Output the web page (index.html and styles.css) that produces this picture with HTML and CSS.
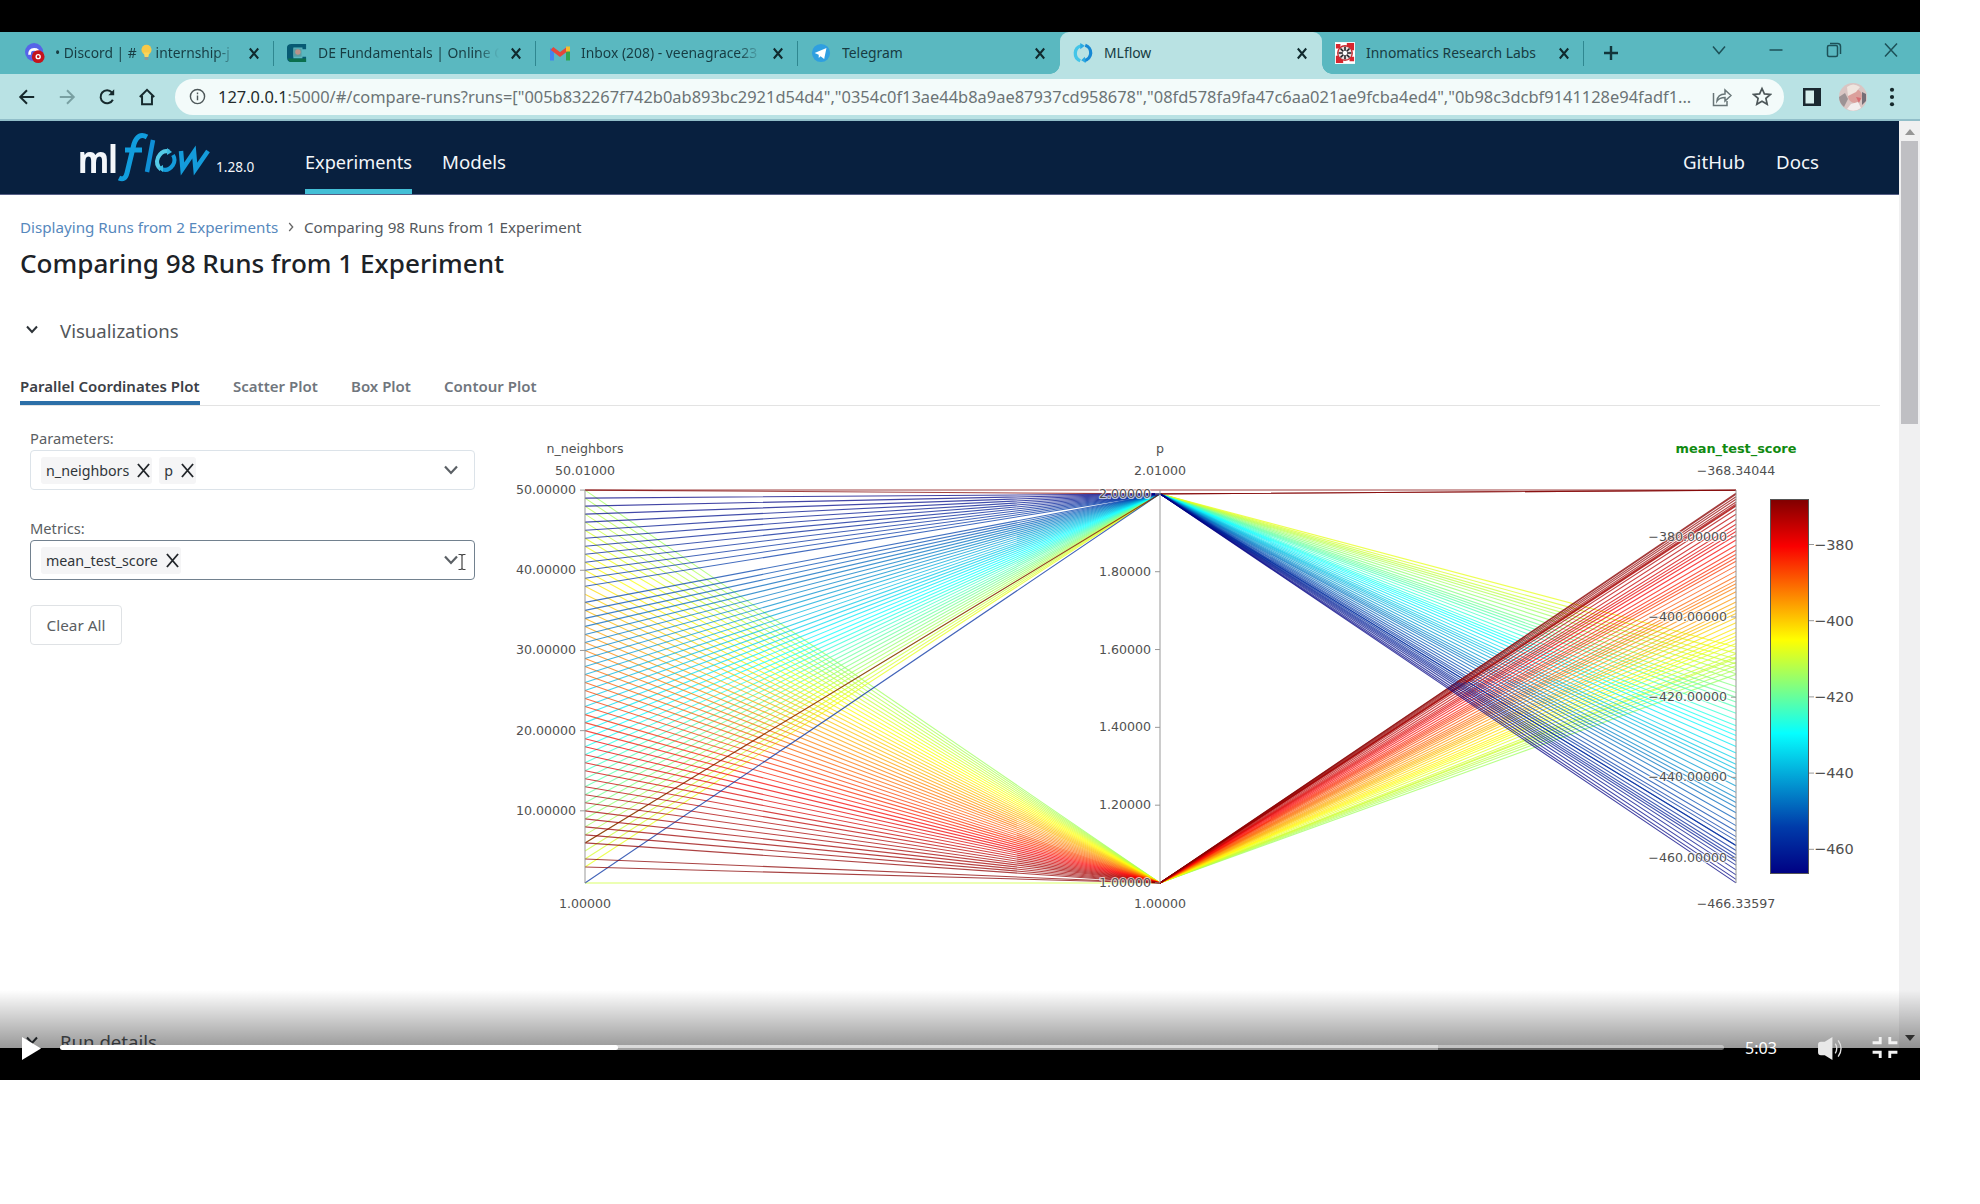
FILE: index.html
```html
<!DOCTYPE html>
<html lang="en">
<head>
<meta charset="utf-8">
<title>MLflow</title>
<link rel="stylesheet" href="styles.css">
</head>
<body>
<main class="video">
  <div class="screen">
    <div class="tabstrip">
      <div class="tab tab-discord">
        <svg class="fav" viewBox="0 0 22 22"><circle cx="10" cy="10" r="10" fill="#5664e8"/><path d="M5 13c0-4 1-6 5-6s5 2 5 5" fill="#5664e8" stroke="#fff" stroke-width="3"/><circle cx="14.5" cy="15" r="7" fill="#c5141c"/><circle cx="14.5" cy="15" r="2.2" fill="none" stroke="#fff" stroke-width="1.5"/></svg>
        <span class="title fade"><span class="lead">• Discord | #</span><svg class="bulb" viewBox="0 0 12 18"><circle cx="6" cy="6" r="5.5" fill="#f7c948"/><path d="M3 9h6l-1 5H4z" fill="#fbd55c"/><path d="M4 14h4v3H4z" fill="#8d9a98"/></svg><span>internship-j</span></span>
        <svg class="x" viewBox="0 0 10 12"><path d="M.8 1l8.400 10M9.200 1L.8 11"/></svg>
      </div>
      <div class="tab">
        <svg class="fav" viewBox="0 0 22 22"><path d="M21 1v6h-4V5H7v12h10v-2h4v6H5q-5 0-5-5V5q0-4 5-4z" fill="#075a73"/><path d="M1 17h20v4H5q-3 0-4-4z" fill="#0b6f4d"/><rect x="7" y="6" width="9" height="9" fill="#5c9da2"/><circle cx="12" cy="10" r="3" fill="#b9938a"/></svg>
        <span class="title fade">DE Fundamentals | Online C</span>
        <svg class="x" viewBox="0 0 10 12"><path d="M.8 1l8.400 10M9.200 1L.8 11"/></svg>
      </div>
      <div class="tab">
        <svg class="fav mail" viewBox="0 0 20 16"><path d="M2 15V3" stroke="#4385f0" stroke-width="4"/><path d="M18 15V3" stroke="#30a650" stroke-width="4"/><path d="M2 3l8 6 8-6" fill="none" stroke="#e4473b" stroke-width="4"/><path d="M16 1h4v5h-4z" fill="#f6bd2b"/></svg>
        <span class="title fade">Inbox (208) - veenagrace23</span>
        <svg class="x" viewBox="0 0 10 12"><path d="M.8 1l8.400 10M9.200 1L.8 11"/></svg>
      </div>
      <div class="tab nosep">
        <svg class="fav" viewBox="0 0 22 22"><circle cx="11" cy="11" r="10" fill="#2f9fe0"/><path d="M4 11l13-5.500-2.500 12-4-3-2 2V13z" fill="#fff"/></svg>
        <span class="title">Telegram</span>
        <svg class="x" viewBox="0 0 10 12"><path d="M.8 1l8.400 10M9.200 1L.8 11"/></svg>
      </div>
      <div class="tab active">
        <svg class="fav" viewBox="0 0 22 22" fill="none" stroke-width="3.600"><path d="M8 19.500A8.700 8.700 0 0 1 9 3" stroke="#43c5e8"/><path d="M13.500 2.500a8.700 8.700 0 0 1-1 16.800" stroke="#1688d4"/><path d="M8 0l5 3-5 4zM14 22l-5-3 4-4z" fill="#2ba9e2"/></svg>
        <span class="title">MLflow</span>
        <svg class="x" viewBox="0 0 10 12"><path d="M.8 1l8.400 10M9.200 1L.8 11"/></svg>
      </div>
      <div class="tab last">
        <svg class="fav" viewBox="0 0 22 24"><path d="M0 0h22v24H0z" fill="#fff"/><path d="M1 2h5v5H1zM13 1h8v8h-8zM1 15h8v8H1zM16 16h5v5h-5z" fill="#d8262e"/><circle cx="11" cy="12" r="8" fill="#e8dedd" stroke="#c92a30" stroke-width="1.500"/><path d="M11 5v14M4 12h14M6 7l10 10M16 7L6 17" stroke="#1c1d22" stroke-width="1.700"/><circle cx="11" cy="12" r="2.500" fill="#fff"/></svg>
        <span class="title">Innomatics Research Labs</span>
        <svg class="x" viewBox="0 0 10 12"><path d="M.8 1l8.400 10M9.200 1L.8 11"/></svg>
      </div>
      <svg class="plus" viewBox="0 0 16 16"><path d="M8 1v14M1 8h14"/></svg>
      <div class="winctl">
        <svg viewBox="0 0 16 16"><path d="M2 4.500l6 7 6-7"/></svg>
        <svg viewBox="0 0 16 16"><path d="M1.500 8h13"/></svg>
        <svg viewBox="0 0 16 16"><rect x="1.500" y="3.500" width="10" height="11" rx="1.500"/><path d="M4 1.500h7.500q3 0 3 3V12"/></svg>
        <svg viewBox="0 0 16 16"><path d="M2 1.500l12 13M14 1.500l-12 13"/></svg>
      </div>
    </div>

    <div class="toolbar">
      <div class="navbtns">
        <svg viewBox="0 0 20 20"><path d="M18 10H3M10 2.500L2.500 10l7.500 7.500"/></svg>
        <svg viewBox="0 0 20 20" class="dim"><path d="M2 10h15M10 2.500l7.500 7.500-7.500 7.500"/></svg>
        <svg viewBox="0 0 20 20"><path d="M16.500 13A7.200 7.200 0 1 1 15.500 5l1.500 2"/><path d="M18 1.500V8h-6.500z" fill="#16292c" stroke="none"/></svg>
        <svg viewBox="0 0 20 20"><path d="M2 10l8-8 8 8M4.500 8.500V18h11V8.500"/></svg>
      </div>
      <div class="omnibox">
        <svg class="info" viewBox="0 0 18 18"><circle cx="9" cy="9" r="7.500"/><path d="M9 8v5M9 4.800v1.700"/></svg>
        <span class="url"><b>127.0.0.1</b>:5000/#/compare-runs?runs=["005b832267f742b0ab893bc2921d54d4","0354c0f13ae44b8a9ae87937cd958678","08fd578fa9fa47c6aa021ae9fcba4ed4","0b98c3dcbf9141128e94fadf1...</span>
        <svg class="share" viewBox="0 0 20 20"><path d="M1.500 6v12.500H15V14M5 14c.5-5 3-7 8-7V3l6 5.500L13 14v-3.500c-4 0-6 .8-8 3.500z"/></svg>
        <svg class="star" viewBox="0 0 20 20"><path d="M10 2l2.400 5.400 5.900.6-4.400 3.900 1.300 5.800L10 14.700l-5.200 3 1.300-5.800L1.700 8l5.900-.6z"/></svg>
      </div>
      <svg class="panel" viewBox="0 0 18 18"><path d="M0 0h18v18H0z" fill="#1b2830"/><path d="M2.500 2.500h8.500v13H2.500z" fill="#d8f0ee"/></svg>
      <svg class="avatar" viewBox="0 0 28 28"><circle cx="14" cy="14" r="14" fill="#d9c5c3"/><path d="M0 14a14 14 0 0 0 5 10l4-8-3-6z" fill="#9c9294"/><circle cx="16" cy="13" r="7" fill="#dba09c"/><path d="M8 4q6-5 13 0l-4 5-8 4z" fill="#efe5df"/><path d="M12 21l7-2 3 6q-7 5-14 1z" fill="#f3eeee"/><path d="M23 9l4 2v7l-4 4z" fill="#756d76"/><path d="M17 14l5 1-2 5z" fill="#d66d72"/></svg>
      <svg class="dots" viewBox="0 0 6 22"><circle cx="3" cy="3" r="2.300"/><circle cx="3" cy="11" r="2.300"/><circle cx="3" cy="19" r="2.300"/></svg>
    </div>

    <div class="viewport">
      <div class="page">
        <header class="mlnav">
          <div class="logo"><span class="ml">ml</span><svg class="flow" viewBox="0 0 92 52"><g fill="none" stroke-linecap="butt"><path d="M27 5q-9-5-13 7L7 41q-2 8-8 5M5 18h17" stroke="#119ddd" stroke-width="5"/><path d="M33 8l-6 32" stroke="#0f8fd6" stroke-width="4.500"/><path d="M41 37.500q-6-5-3-12 4-8 11-6" stroke="#55cbe7" stroke-width="4"/><path d="M53 23q3 5 0 10-5 7-11 4" stroke="#149cdb" stroke-width="4"/><path d="M61 19l1.500 18L74 20l1.500 17L88 19" stroke="#149cdb" stroke-width="4.500"/></g><path d="M47 16l5 4-5 3zM43 40l-5-4 5-3z" fill="#3dbce3"/></svg></div>
          <span class="ver">1.28.0</span>
          <a class="nl cur n1">Experiments</a><a class="nl n2">Models</a>
          <a class="nl n3">GitHub</a><a class="nl n4">Docs</a>
        </header>
        <nav class="crumbs"><a>Displaying Runs from 2 Experiments</a><svg viewBox="0 0 6 10"><path d="M1.200 1l3.500 4-3.500 4"/></svg><span>Comparing 98 Runs from 1 Experiment</span></nav>
        <h1>Comparing 98 Runs from 1 Experiment</h1>
        <div class="section"><svg viewBox="0 0 12 9"><path d="M1 1.500l5 5.500 5-5.500"/></svg><span>Visualizations</span></div>
        <div class="plottabs"><a class="on p1">Parallel Coordinates Plot</a><a class="p2">Scatter Plot</a><a class="p3">Box Plot</a><a class="p4">Contour Plot</a></div>
        <div class="cols">
          <div class="form">
            <label>Parameters:</label>
            <div class="select">
              <span class="chip c1">n_neighbors<svg viewBox="0 0 14 16"><path d="M1 1l12 14M13 1L1 15"/></svg></span>
              <span class="chip c2">p<svg viewBox="0 0 14 16"><path d="M1 1l12 14M13 1L1 15"/></svg></span>
              <svg class="caret" viewBox="0 0 14 10"><path d="M1 1.500L7 8l6-6.500"/></svg>
            </div>
            <label class="second">Metrics:</label>
            <div class="select focus">
              <span class="chip c3">mean_test_score<svg viewBox="0 0 14 16"><path d="M1 1l12 14M13 1L1 15"/></svg></span>
              <svg class="caret" viewBox="0 0 14 10"><path d="M1 1.500L7 8l6-6.500"/></svg>
              <svg class="ibeam" viewBox="0 0 8 18"><path d="M.5 1.500h2.500l1 1 1-1h2.500M4 2.500v13M.5 16.500h2.500l1-1 1 1h2.500"/></svg>
            </div>
            <button>Clear All</button>
          </div>
          <svg id="plot" viewBox="500 430 1380 500" width="1380" height="500"></svg>
        </div>
        <div class="section details"><svg viewBox="0 0 12 9"><path d="M1 1.500l5 5.500 5-5.500"/></svg><span>Run details</span></div>
      </div>
      <div class="scroll"><i class="up"></i><i class="thumb"></i><i class="down"></i></div>
    </div>
  </div>
  <div class="controls">
    <svg class="play" viewBox="0 0 20 23"><path d="M0 0l19 11.500L0 23z" fill="#fff"/></svg>
    <div class="track"><div class="buffer"></div><div class="played"></div></div>
    <span class="time">5:03</span>
    <svg class="vol" viewBox="0 0 28 24"><path d="M1 8q0-3 3-3h4l8-5v24l-8-5H4q-3 0-3-3z" fill="#e8e8e8"/><path d="M19 7q3 5 0 10M22 3.500q6 8.500 0 17" fill="none" stroke="#e0e0e0" stroke-width="1.400"/></svg>
    <svg class="full" viewBox="0 0 26 22"><path d="M0 6h8V0M18 0v6h8M0 16h8v6M18 22v-6h8" fill="none" stroke="#f2f2f2" stroke-width="3"/></svg>
  </div>
</main>
<script src="plot.js"></script>
</body>
</html>
```
FILE: plot.js
```js
const svg = document.getElementById('plot');
const NS = 'http://www.w3.org/2000/svg';
function add(tag, attrs, text) {
  const e = document.createElementNS(NS, tag);
  for (const k in attrs) e.setAttribute(k, attrs[k]);
  if (text !== undefined) e.textContent = text;
  svg.appendChild(e);
  return e;
}
const X = [585, 1160, 1736], TOP = 490, BOTTOM = 883;
const scale = (lo, hi) => v => BOTTOM - (v - lo) / (hi - lo) * (BOTTOM - TOP);
const yn = scale(1, 50.01), yp = scale(1, 2.01), ys = scale(-466.33597, -368.34044);

// Jet colour scale
const JET = [[0, 0, 0, 131], [.125, 0, 60, 170], [.375, 5, 255, 255], [.625, 255, 255, 0], [.875, 250, 0, 0], [1, 128, 0, 0]];
function jet(s) {
  const t = Math.max(0, Math.min(1, (s + 466.336) / 97.9956));
  let i = 1;
  while (i < 5 && t > JET[i][0]) i++;
  const a = JET[i - 1], b = JET[i], f = (t - a[0]) / (b[0] - a[0]);
  return 'rgb(' + [1, 2, 3].map(k => Math.round(a[k] + (b[k] - a[k]) * f)).join(',') + ')';
}
const jitter = n => Math.sin(n * 7.3) * .25;

const runs = [];
for (let n = 3; n <= 49; n++) {
  if (n === 37) continue;
  const s = n > 37 ? -466.2 + (49 - n) * 1.02 : -453.2 + (36 - n) * 1.385;
  runs.push([n, 2, s + jitter(n)]);
}
for (let n = 3; n <= 50; n++) {
  if (n === 5) continue;
  const s = n < 12 ? -368.9 - (n - 3) * .45 : -373.4 - (n - 12) * 1.08;
  runs.push([n, 1, s + jitter(n + 2)]);
}
runs.push([1, 1, -410], [1, 2, -457], [6, 2, -368.4], [50, 2, -368.4], [50.01, 2.01, -368.34]);
runs.sort((a, b) => Math.abs(a[2] + 415) - Math.abs(b[2] + 415));
for (const [n, p, s] of runs) {
  add('path', { d: `M${X[0]} ${yn(n)}L${X[1]} ${yp(p)}L${X[2]} ${ys(s)}`, stroke: jet(s), class: 'run' });
}

for (const x of X) add('path', { d: `M${x} ${TOP}V${BOTTOM}`, class: 'axis' });
function ticks(axis, values, y) {
  for (const v of values) {
    add('path', { d: `M${X[axis] - 5} ${y(v)}h5`, class: 'axis' });
    add('text', { x: X[axis] - 9, y: y(v) + 4, class: 'lab end' }, v.toFixed(5).replace('-', '−'));
  }
}
ticks(0, [50, 40, 30, 20, 10], yn);
ticks(1, [2, 1.8, 1.6, 1.4, 1.2, 1], yp);
ticks(2, [-380, -400, -420, -440, -460], ys);
[['n_neighbors', '50.01000', '1.00000'], ['p', '2.01000', '1.00000'], ['mean_test_score', '−368.34044', '−466.33597']].forEach((t, i) => {
  add('text', { x: X[i], y: 453, class: i === 2 ? 'lab mid key' : 'lab mid' }, t[0]);
  add('text', { x: X[i], y: 474.5, class: 'lab mid' }, t[1]);
  add('text', { x: X[i], y: 908, class: 'lab mid' }, t[2]);
});

const g = add('linearGradient', { id: 'jet', x1: 0, y1: 1, x2: 0, y2: 0 });
for (const [o, r, gr, b] of JET) {
  const stop = document.createElementNS(NS, 'stop');
  stop.setAttribute('offset', o);
  stop.setAttribute('stop-color', `rgb(${r},${gr},${b})`);
  g.appendChild(stop);
}
add('rect', { x: 1770.5, y: 499.500, width: 38, height: 374, fill: 'url(#jet)', stroke: '#555' });
[-380, -400, -420, -440, -460].forEach((v, i) => {
  const y = 544.5 + i * 76.2;
  add('path', { d: `M1809 ${y}h5`, class: 'axis' });
  add('text', { x: 1814, y: y + 5, class: 'bar' }, '−' + -v);
});
```
FILE: styles.css
```css
* { box-sizing: border-box; }
body { margin: 0; background: #fff; font-family: "Noto Sans", "Open Sans", sans-serif; }
svg { display: block; flex: none; fill: none; }
.video { position: relative; width: 1920px; height: 1080px; padding-top: 32px; background: #000; }
.screen { height: 1016px; overflow: hidden; background: #fff; }

.tabstrip { display: flex; align-items: center; height: 42px; padding-left: 12px; background: #5ab8c0; }
.tab { position: relative; display: flex; align-items: center; flex: none; width: 262px; height: 42px; padding: 0 15px 0 13px; color: #173c42; }
.tab::after { content: ""; position: absolute; right: 0; top: 9px; width: 1.500px; height: 25px; background: #2f8790; }
.tab.nosep::after, .tab.active::after { display: none; }
.tab.active { background: #b9e2e3; border-radius: 9px 9px 0 0; }
.tab.active::before { content: ""; position: absolute; left: -10px; bottom: 0; width: 10px; height: 10px; background: radial-gradient(circle at 0 0, transparent 9.500px, #b9e2e3 10px); }
.tab.last::before { content: ""; position: absolute; left: 0; bottom: 0; width: 10px; height: 10px; background: radial-gradient(circle at 100% 0, transparent 9.500px, #b9e2e3 10px); }
.fav { width: 20px; height: 22px; }
.fav.mail { height: 17px; margin-left: 1px; }
.title { display: flex; align-items: center; flex: 1; overflow: hidden; height: 24px; margin: -2px 12px 0 11px; font-size: 13.9px; white-space: nowrap; }
.title.fade { -webkit-mask-image: linear-gradient(90deg, #000 88%, transparent); mask-image: linear-gradient(90deg, #000 88%, transparent); }
.tab .x { width: 10px; height: 13px; stroke: #102a2e; stroke-width: 2; }
.tab-discord .title { font-size: 13.8px; margin-left: 10px; }
.bulb { width: 11px; height: 17px; margin: 0 4px; }
.plus { width: 16px; height: 18px; margin-left: 19px; stroke: #12353a; stroke-width: 2.400; }
.winctl { display: flex; gap: 41.300px; margin: -6px 21px 0 auto; }
.winctl svg { width: 16px; height: 16px; stroke: #1d5158; stroke-width: 1.500; }

.toolbar { display: flex; align-items: center; height: 47px; background: #b9e2e4; border-bottom: 2px solid #91bec9; }
.navbtns { display: flex; gap: 22px; padding-left: 18px; width: 175px; }
.navbtns svg { width: 18px; height: 20px; stroke: #16292c; stroke-width: 2.200; }
.navbtns .dim { stroke: #79a0a2; }
.omnibox { display: flex; align-items: center; width: 1609px; height: 36px; padding-left: 14px; border-radius: 18px; background: #f3fbfa; color: #6b7375; }
.info { width: 17px; height: 19px; stroke: #4d5759; stroke-width: 1.500; }
.url { width: 1494px; margin-left: 12px; font-size: 16.43px; white-space: nowrap; }
.url b { font-weight: 400; color: #232b2d; }
.share { width: 20px; height: 20px; stroke: #687577; stroke-width: 1.500; }
.star { width: 20px; height: 21px; margin-left: 20px; stroke: #4d5759; stroke-width: 1.700; }
.panel { width: 18px; height: 18px; margin-left: 19px; }
.avatar { width: 28px; height: 28px; margin-left: 18px; }
.dots { width: 6px; height: 20px; margin-left: 22px; fill: #16292c; }

.viewport { display: flex; height: 927px; }
.page { width: 1899px; overflow: hidden; }
.mlnav { display: flex; height: 74px; padding-left: 78px; background: #08203f; border-bottom: 1px solid #555e85; color: #f3f6fa; line-height: 82px; }
.logo { display: flex; width: 138px; }
.ml { width: 42px; font-size: 38px; font-weight: 700; letter-spacing: -1px; line-height: 75px; transform: scaleX(.84); transform-origin: 0 50%; }
.flow { width: 92px; height: 52px; margin-top: 11px; overflow: visible; }
.ver { width: 89px; padding-top: 5px; font-size: 13.6px; }
.nl { font-size: 18.700px; }
.cur { font-size: 18.160px; box-shadow: inset 0 -5px #43bfd6; }
.n1 { width: 107px; margin-right: 30px; }
.n2 { width: 1241px; }
.n3 { width: 93px; }

.crumbs { display: flex; align-items: center; height: 20px; margin: 22px 0 0 20px; font-size: 15.180px; line-height: 20px; color: #55595d; }
.crumbs a { width: 258px; color: #5688bd; white-space: nowrap; }
.crumbs svg { width: 6px; height: 10px; margin: 0 10px; stroke: #666; stroke-width: 1.300; }
.crumbs span { white-space: nowrap; }
h1 { margin: 8px 0 0 20px; font-size: 26.100px; line-height: 36px; font-weight: 500; color: #1c2227; }
.section { display: flex; align-items: center; height: 24px; margin: 37px 0 0 26px; font-size: 18.600px; color: #53575b; }
.section svg { width: 12px; height: 9px; margin: -2px 22px 0 0; stroke: #2d3338; stroke-width: 2; }
.plottabs { display: flex; height: 37px; margin: 27px 19px 0 20px; border-bottom: 1px solid #e3e3e3; line-height: 34px; font-size: 15px; font-weight: 600; color: #70767d; white-space: nowrap; }
.plottabs .on { color: #3b4046; box-shadow: inset 0 -4px #2c6fa8; }
.p1 { width: 180px; margin-right: 33px; }
.p2 { width: 118px; }
.p3 { width: 93px; }

.cols { display: flex; }
.form { width: 500px; padding: 22px 25px 0 30px; }
label { display: block; height: 22px; font-size: 14.700px; line-height: 20px; color: #5a5e62; }
label.second { margin-top: 28px; }
.select { position: relative; display: flex; align-items: center; gap: 7px; height: 40px; padding-left: 10px; border: 1px solid #dce3e9; border-radius: 4px; }
.select.focus { border: 1.500px solid #72818f; }
.chip { display: flex; align-items: center; height: 27px; padding: 0 2px 0 5px; border-radius: 3px; background: #f5f5f6; font-size: 14.250px; color: #30353a; }
.chip svg { width: 13px; height: 15px; margin-left: 8px; stroke: #23272b; stroke-width: 2; }
.caret { width: 14px; height: 10px; margin-left: auto; margin-right: 16px; stroke: #5b6065; stroke-width: 2.200; }
.ibeam { position: absolute; right: 8px; top: 12px; width: 8px; height: 18px; stroke: #444; stroke-width: 1.200; }
button { display: block; width: 92px; height: 40px; margin-top: 25px; padding: 0; border: 1px solid #dfe2e5; border-radius: 4px; background: #fff; font: 15.300px "Noto Sans", sans-serif; color: #5a5e62; }
#plot { margin-top: 24px; }
.run { stroke-width: 1.100; stroke-opacity: .74; fill: none; }
.axis { stroke: #999; stroke-width: 1; fill: none; }
.lab { font: 12.600px "DejaVu Sans", Verdana, sans-serif; fill: #505050; paint-order: stroke; stroke: rgba(255,255,255,.7); stroke-width: 2px; }
.mid { text-anchor: middle; }
.end { text-anchor: end; }
.key { font-size: 12.900px; font-weight: 700; fill: #118a11; }
.bar { font: 14.500px "DejaVu Sans", Verdana, sans-serif; fill: #505050; }
.details { margin-top: 99px; margin-bottom: -10px; }

.scroll { display: flex; flex-direction: column; align-items: center; width: 21px; background: #f0f0f1; }
.up { margin-top: 8px; border: 5px solid transparent; border-top: 0; border-bottom: 6px solid #969696; }
.thumb { width: 17px; height: 283px; margin-top: 6px; background: #bfbfc3; }
.down { margin-top: 611px; border: 5px solid transparent; border-bottom: 0; border-top: 6px solid #444; }

.controls { position: absolute; left: 0; right: 0; bottom: 0; display: flex; height: 90px; padding: 25px 22px 0; color: #fff; background: linear-gradient(transparent, rgba(0,0,0,.4) 58px); }
.controls > * { margin-top: 22px; }
.play { width: 20px; height: 23px; }
.controls .track { position: relative; width: 1664px; height: 5px; margin: 30px 0 0 18px; border-radius: 3px; background: rgba(255,255,255,.4); overflow: hidden; }
.buffer { position: absolute; left: 0; top: 0; width: 1378px; height: 5px; background: rgba(255,255,255,.4); }
.played { position: absolute; left: 0; top: 0; width: 558px; height: 5px; border-radius: 3px; background: #fff; }
.time { width: 72px; margin-left: 21px; font-size: 16.100px; line-height: 23px; }
.vol { width: 27px; height: 23px; }
.full { width: 26px; height: 21px; margin-left: 28px; }
```
